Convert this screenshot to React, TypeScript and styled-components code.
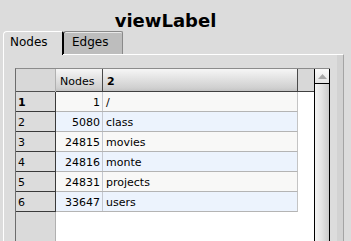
import * as React from 'react'
import styled, { createGlobalStyle } from 'styled-components'

const GlobalStyle = createGlobalStyle`
	html, body {
		margin: 0;
		padding: 0;
		background: #dcdcdc;
		font-family: 'DejaVu Sans', 'Liberation Sans', sans-serif;
	}
`

const Window = styled.div`
	width: 351px;
	height: 241px;
	overflow: hidden;
	display: flex;
	flex-direction: column;
	background: #dcdcdc;
`

const Title = styled.div`
	height: 28px;
	padding: 10px 20px 0 0;
	text-align: center;
	font-size: 18px;
	line-height: 21px;
	font-weight: bold;
	color: #000;
`

const TabBar = styled.div`
	display: flex;
	margin-left: 3px;
	height: 23px;
`

const Tab = styled.div<{ $selected?: boolean; $width: number; $pad: number }>`
	position: relative;
	z-index: ${p => (p.$selected ? 1 : 0)};
	box-sizing: border-box;
	width: ${p => p.$width}px;
	height: ${p => (p.$selected ? 24 : 23)}px;
	padding: 3px 0 0 ${p => p.$pad}px;
	font-size: 12px;
	line-height: 14px;
	color: #000;
	background: ${p => (p.$selected ? '#dcdcdc' : '#bdbdbd')};
	border-top: 1px solid ${p => (p.$selected ? '#ffffff' : '#8a8a8a')};
	border-left: 1px solid ${p => (p.$selected ? '#ffffff' : '#000')};
	border-right: 1px solid ${p => (p.$selected ? '#000' : '#8a8a8a')};
	border-radius: ${p => (p.$selected ? '4px 1px 0 0' : '3px 2px 0 0')};
	box-shadow: ${p => (p.$selected ? 'none' : 'inset 0 1px 0 #e8e8e8')};
`

const Panel = styled.div`
	flex: 1;
	width: 341px;
	box-sizing: border-box;
	margin-left: 3px;
	padding: 13px 0 0 11px;
	border-top: 1px solid #ffffff;
	border-left: 1px solid #ffffff;
	border-right: 1px solid #a4a4a4;
	box-shadow: inset -6px 0 0 #d2d2d2;
`

const ScrollPane = styled.div`
	display: flex;
	width: 315px;
	height: 200px;
	border-top: 1px solid #8c8c8c;
	border-left: 1px solid #6c6c6c;
	box-sizing: border-box;
	background: #fff;
`

const RowHeader = styled.div`
	width: 40px;
	flex-shrink: 0;
	box-sizing: border-box;
	background: #dadada;
	border-right: 1px solid #b0b0b0;
`

const Corner = styled.div`
	height: 23px;
	box-sizing: border-box;
	background: #d8d8d8;
	border-bottom: 1px solid #505050;
`

const RowHead = styled.div<{ $bold?: boolean }>`
	height: 20px;
	box-sizing: border-box;
	padding: 3px 0 0 2px;
	line-height: 16px;
	font-size: 11px;
	font-weight: ${p => (p.$bold ? 'bold' : 'normal')};
	color: #000;
	background: #dcdcdc;
	border-bottom: 1px solid #3a3a3a;
	border-right: 1px solid #3a3a3a;
	margin-right: -1px;
`

const Viewport = styled.div`
	width: 258px;
	flex-shrink: 0;
	background: #fff;
`

const HeaderRow = styled.div`
	display: flex;
	height: 23px;
	box-sizing: border-box;
	background: #d8d8d8;
	border-bottom: 1px solid #404040;
`

const HeaderCell = styled.div<{ $width: number; $bold?: boolean }>`
	width: ${p => p.$width}px;
	box-sizing: border-box;
	padding: 4px 0 0 4px;
	line-height: 18px;
	font-size: 11px;
	font-weight: ${p => (p.$bold ? 'bold' : 'normal')};
	color: #000;
	background: linear-gradient(#f6f6f6, #d0d0d0 85%, #c4c4c4);
	border-right: 1px solid #4a4a4a;
`

const Row = styled.div<{ $even: boolean }>`
	display: flex;
	width: 242px;
	height: 20px;
	box-sizing: border-box;
	background: ${p => (p.$even ? '#ecf3fd' : '#f8f8f7')};
	border-bottom: 1px solid #b4b4b4;
	border-right: 1px solid #c4c4c4;
	font-size: 11px;
	line-height: 16px;
	color: #000;
`

const NumCell = styled.div`
	width: 47px;
	box-sizing: border-box;
	padding: 3px 2px 0 0;
	text-align: right;
	border-right: 1px solid #c4c8d0;
`

const NameCell = styled.div`
	flex: 1;
	padding: 3px 0 0 3px;
`

const ScrollBar = styled.div`
	width: 16px;
	flex-shrink: 0;
	box-sizing: border-box;
	display: flex;
	flex-direction: column;
	border-left: 1px solid #000;
	border-right: 1px solid #000;
	background: #d8d8d8;
`

const ArrowButton = styled.div`
	height: 14px;
	display: flex;
	align-items: center;
	justify-content: center;
	background: linear-gradient(#fafafa, #e4e4e4);
	border-bottom: 1px solid #000;
`

const Track = styled.div`
	flex: 1;
	background: linear-gradient(90deg, #f4f4f4, #e2e2e2 50%, #cacaca);
`

const rows = [
	{ n: 1, nodes: 1, name: '/' },
	{ n: 2, nodes: 5080, name: 'class' },
	{ n: 3, nodes: 24815, name: 'movies' },
	{ n: 4, nodes: 24816, name: 'monte' },
	{ n: 5, nodes: 24831, name: 'projects' },
	{ n: 6, nodes: 33647, name: 'users' },
]

export default function App() {
	return (
		<>
			<GlobalStyle />
			<Window>
				<Title>viewLabel</Title>
				<TabBar>
					<Tab $selected $width={60} $pad={6}>
						Nodes
					</Tab>
					<Tab $width={60} $pad={8}>
						Edges
					</Tab>
				</TabBar>
				<Panel>
					<ScrollPane>
						<RowHeader>
							<Corner />
							{rows.map(r => (
								<RowHead key={r.n} $bold={r.n === 1}>
									{r.n}
								</RowHead>
							))}
						</RowHeader>
						<Viewport>
							<HeaderRow>
								<HeaderCell $width={47}>Nodes</HeaderCell>
								<HeaderCell $width={195} $bold>
									2
								</HeaderCell>
							</HeaderRow>
							{rows.map((r, i) => (
								<Row key={r.n} $even={i % 2 === 1}>
									<NumCell>{r.nodes}</NumCell>
									<NameCell>{r.name}</NameCell>
								</Row>
							))}
						</Viewport>
						<ScrollBar>
							<ArrowButton>
								<svg width="9" height="5" viewBox="0 0 9 5">
									<path d="M0 5 L4.5 0 L9 5 Z" fill="#a8a8a8" />
								</svg>
							</ArrowButton>
							<Track />
						</ScrollBar>
					</ScrollPane>
				</Panel>
			</Window>
		</>
	)
}
